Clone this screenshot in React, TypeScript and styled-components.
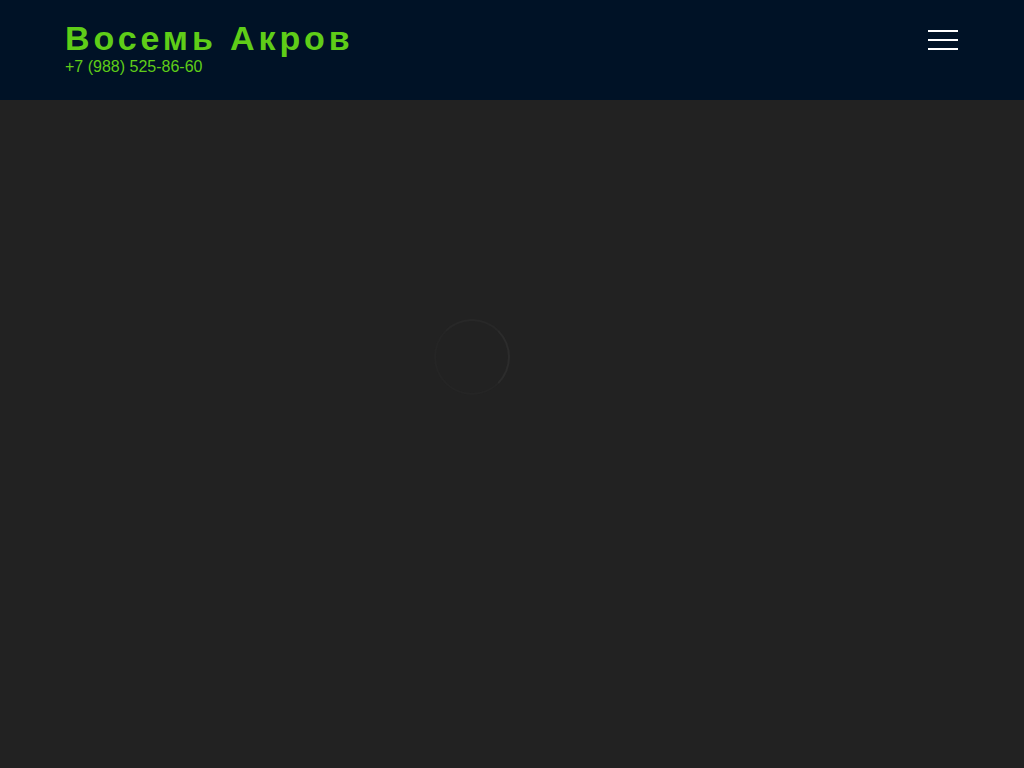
import React from 'react';
import styled, { createGlobalStyle, keyframes } from 'styled-components';

const GlobalStyle = createGlobalStyle`
  html, body {
    margin: 0;
    padding: 0;
    background-color: #222222;
    font-family: "Liberation Sans", Arial, sans-serif;
  }
`;

const Header = styled.header`
  height: 100px;
  background-color: #001226;
  display: flex;
  align-items: center;
  justify-content: space-between;
  padding: 0 66px 0 65px;
  box-sizing: border-box;
`;

const Brand = styled.div`
  display: flex;
  flex-direction: column;
  margin-top: -6px;
`;

const Title = styled.h1`
  margin: 0;
  font-size: 34px;
  line-height: 40px;
  font-weight: bold;
  letter-spacing: 3.9px;
  color: #5fcd18;
`;

const Phone = styled.a`
  font-size: 16px;
  line-height: 18px;
  color: #5fcd18;
  text-decoration: none;
`;

const Burger = styled.button`
  width: 30px;
  height: 20px;
  padding: 0;
  border: none;
  background: transparent;
  display: flex;
  flex-direction: column;
  justify-content: space-between;
  margin-top: -20px;
  cursor: pointer;

  span {
    display: block;
    height: 2px;
    background-color: #ffffff;
  }
`;

const Main = styled.main`
  height: 1600px;
  display: flex;
  justify-content: center;
  padding-top: 219px;
  padding-right: 80px;
  box-sizing: border-box;
`;

const spin = keyframes`
  to { transform: rotate(360deg); }
`;

const Loader = styled.div`
  width: 76px;
  height: 76px;
  border-radius: 50%;
  border: 2px solid #252525;
  border-top-color: #282828;
  border-right-color: #2c2c2c;
  box-sizing: border-box;
  animation: ${spin} 1.2s linear infinite;
  animation-play-state: paused;
`;

const App = () => {
  return (
    <>
      <GlobalStyle />
      <Header>
        <Brand>
          <Title>Восемь Акров</Title>
          <Phone href="tel:+79885258660">+7 (988) 525-86-60</Phone>
        </Brand>
        <Burger aria-label="menu">
          <span />
          <span />
          <span />
        </Burger>
      </Header>
      <Main>
        <Loader />
      </Main>
    </>
  );
};

export default App;
